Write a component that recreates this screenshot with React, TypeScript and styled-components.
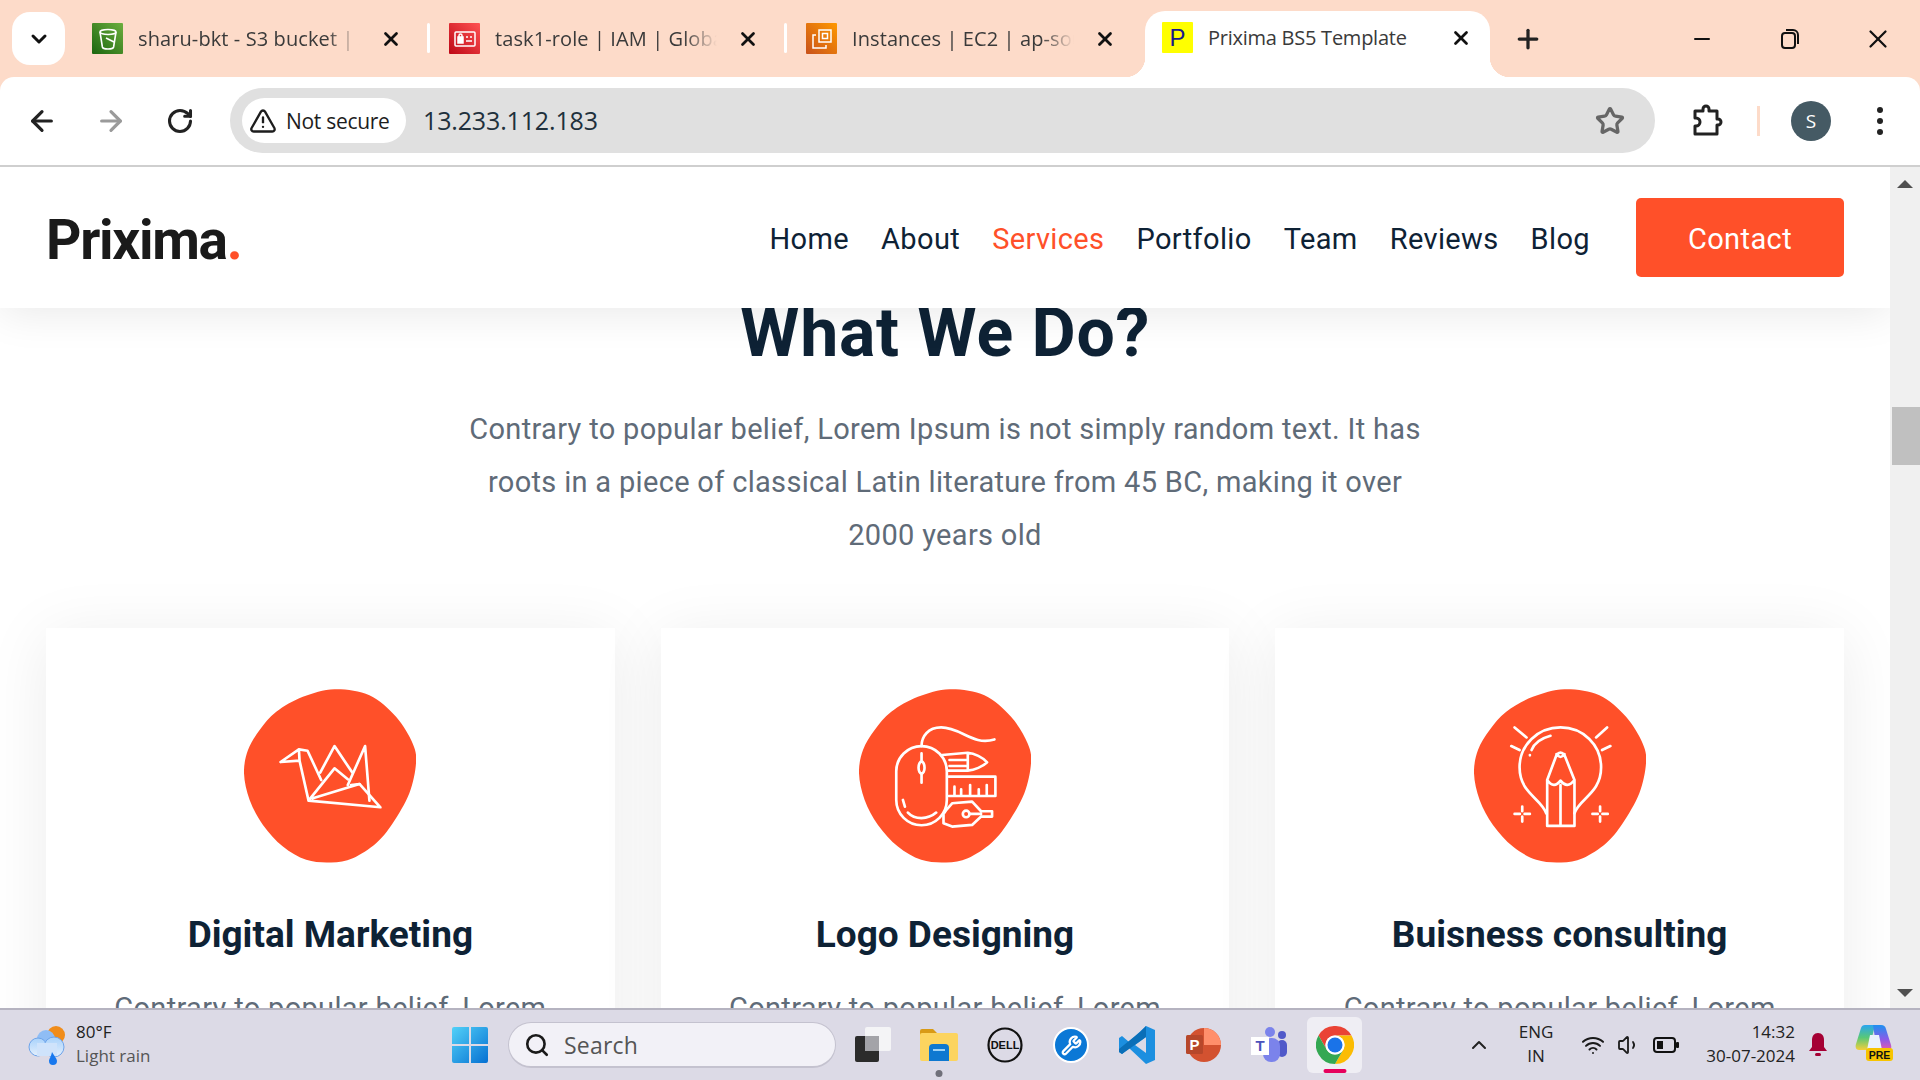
import React from 'react';
import styled, { createGlobalStyle } from 'styled-components';
import { ArrowLeft, ArrowRight, ChevronDown, ChevronUp, Minus, Plus, RotateCw, Search, Star, TriangleAlert, Volume1, Wifi, Wrench, X } from 'lucide-react';

const Global = createGlobalStyle`
  html, body { margin: 0; padding: 0; width: 1920px; height: 1080px; overflow: hidden; background: #fff; }
  * { box-sizing: border-box; }
`;

const UI_FONT = `"Open Sans", "Noto Sans", sans-serif`;
const SITE_FONT = `Roboto, "Liberation Sans", sans-serif`;
const ACCENT = '#ff5029';
const INK = '#0e2235';

const Frame = styled.div`
  width: 1920px;
  height: 1080px;
  display: flex;
  flex-direction: column;
  overflow: hidden;
  background: #fddbc9;
  font-family: ${UI_FONT};
`;

const TabStrip = styled.div`
  height: 77px;
  flex: none;
  display: flex;
  align-items: flex-start;
  background: #fddbc9;
`;

const TabListButton = styled.div`
  width: 53px;
  height: 53px;
  margin: 12px 27px 0 12px;
  border-radius: 18px;
  background: #fff;
  display: flex;
  align-items: center;
  justify-content: center;
  color: #111;
`;

const Tab = styled.div<{ $active?: boolean }>`
  position: relative;
  display: flex;
  align-items: center;
  flex: none;
  width: ${(p) => (p.$active ? '345px' : '335px')};
  height: ${(p) => (p.$active ? '66px' : '53px')};
  margin-top: ${(p) => (p.$active ? '11px' : '12px')};
  padding: ${(p) => (p.$active ? '0 0 13px 17px' : '0')};
  border-radius: ${(p) => (p.$active ? '20px 20px 0 0' : '0')};
  background: ${(p) => (p.$active ? '#fff' : 'transparent')};
  ${(p) =>
    p.$active &&
    `
    margin-left: 4px;
    &::before, &::after { content: ''; position: absolute; bottom: 0; width: 20px; height: 20px; }
    &::before { left: -20px; background: radial-gradient(circle at 0 0, transparent 20px, #fff 20.5px); }
    &::after { right: -20px; background: radial-gradient(circle at 100% 0, transparent 20px, #fff 20.5px); }
  `}
`;

const Favicon = styled.div<{ $bg: string }>`
  width: 31px;
  height: 31px;
  flex: none;
  background: ${(p) => p.$bg};
  display: flex;
  align-items: center;
  justify-content: center;
  border-radius: 1px;
`;

const YellowP = styled.span`
  font-family: "Liberation Sans", sans-serif;
  font-size: 24px;
  line-height: 1;
  color: #1a1a8c;
`;

const TabTitle = styled.div<{ $active?: boolean }>`
  width: 222px;
  margin-left: 15px;
  flex: none;
  font-size: 20px;
  line-height: 28px;
  letter-spacing: ${(p) => (p.$active ? '-0.25px' : '0.1px')};
  color: #3a3a3a;
  white-space: nowrap;
  overflow: hidden;
  ${(p) =>
    !p.$active &&
    `-webkit-mask-image: linear-gradient(to right, #000 85%, transparent 100%); mask-image: linear-gradient(to right, #000 85%, transparent 100%);`}
`;

const TabClose = styled.div`
  width: 42px;
  margin-left: 10px;
  flex: none;
  display: flex;
  justify-content: center;
  color: #111;
`;

const TabSeparator = styled.div`
  width: 3px;
  height: 30px;
  margin: 23px 19px 0 0;
  flex: none;
  background: #fff;
  border-radius: 2px;
`;

const NewTab = styled.div`
  width: 40px;
  height: 53px;
  margin: 12px 0 0 18px;
  display: flex;
  align-items: center;
  justify-content: center;
  color: #222;
`;

const WindowControls = styled.div`
  margin-left: auto;
  margin-top: 12px;
  padding-right: 12px;
  display: flex;
  gap: 28px;
`;

const WindowButton = styled.div`
  width: 60px;
  height: 53px;
  display: flex;
  align-items: center;
  justify-content: center;
  color: #111;
`;

const Toolbar = styled.div`
  height: 90px;
  flex: none;
  display: flex;
  align-items: flex-start;
  padding-top: 11px;
  background: #fff;
  border-radius: 14px 14px 0 0;
  border-bottom: 2px solid #cfcfcf;
`;

const NavButton = styled.div<{ $dim?: boolean }>`
  width: 36px;
  height: 65px;
  flex: none;
  display: flex;
  align-items: center;
  justify-content: center;
  color: ${(p) => (p.$dim ? '#9a9a9a' : '#222')};
`;

const NavButtons = styled.div`
  width: 230px;
  padding-left: 24px;
  flex: none;
  display: flex;
  gap: 33px;
`;

const AddressBar = styled.div`
  width: 1425px;
  height: 65px;
  flex: none;
  background: #e0e0e0;
  border-radius: 33px;
  display: flex;
  align-items: center;
  padding-left: 12px;
`;

const SecurityChip = styled.div`
  width: 164px;
  height: 45px;
  border-radius: 23px;
  background: #fff;
  display: flex;
  align-items: center;
  padding-left: 7px;
  gap: 9px;
  color: #1d1d1d;
  font-size: 21px;
  letter-spacing: -0.3px;
  white-space: nowrap;
`;

const Url = styled.div`
  margin: 0 0 2px 17px;
  font-size: 25px;
  color: #20303c;
  letter-spacing: -0.15px;
`;

const StarSlot = styled.div`
  margin-left: auto;
  margin-right: 30px;
  display: flex;
  color: #666;
`;

const ToolbarRight = styled.div`
  flex: 1;
  height: 65px;
  display: flex;
  align-items: center;
  padding-left: 36px;
`;

const Divider = styled.div`
  width: 3px;
  height: 30px;
  margin-left: 34px;
  background: #fddbc9;
`;

const Avatar = styled.div`
  width: 40px;
  height: 40px;
  margin-left: 31px;
  border-radius: 50%;
  background: #455a64;
  color: #fff;
  display: flex;
  align-items: center;
  justify-content: center;
  font-size: 19px;
`;

const MenuDots = styled.div`
  margin-left: 46px;
  display: flex;
  flex-direction: column;
  gap: 5px;
  & > i { display: block; width: 6px; height: 6px; border-radius: 50%; background: #222; }
`;

const Viewport = styled.div`
  height: 841px;
  flex: none;
  display: flex;
  background: #fff;
  overflow: hidden;
`;

const Page = styled.div`
  width: 1890px;
  flex: none;
  overflow: hidden;
  font-family: ${SITE_FONT};
`;

const Scrollbar = styled.div`
  width: 30px;
  flex: none;
  background: #f0f0f0;
  display: flex;
  flex-direction: column;
  align-items: center;
  padding-top: 13px;
`;

const ScrollThumb = styled.div`
  width: 28px;
  height: 58px;
  margin: 219px 0 0 2px;
  background: #c0c0c0;
`;

const ScrollArrow = styled.svg<{ $down?: boolean }>`
  width: 16px;
  height: 8px;
  flex: none;
  margin-top: ${(p) => (p.$down ? 'auto' : '0')};
  margin-bottom: ${(p) => (p.$down ? '11px' : '0')};
`;

const SiteHeader = styled.header`
  position: relative;
  z-index: 2;
  height: 141px;
  padding: 0 46px;
  display: flex;
  align-items: center;
  background: #fff;
  box-shadow: 0 5px 40px rgba(0, 0, 0, 0.09);
`;

const Logo = styled.div`
  font-size: 55px;
  font-weight: 700;
  letter-spacing: -1.3px;
  color: #1a1a1a;
  margin-top: 5px;
`;

const LogoDot = styled.span`
  color: ${ACCENT};
`;

const SiteNav = styled.nav`
  margin-left: auto;
  display: flex;
  align-items: center;
  gap: 32px;
`;

const SiteLink = styled.a<{ $active?: boolean }>`
  padding-top: 2px;
  font-size: 29px;
  font-weight: 400;
  letter-spacing: 0.37px;
  color: ${(p) => (p.$active ? ACCENT : INK)};
`;

const ContactButton = styled.a`
  width: 208px;
  height: 79px;
  margin-left: 14px;
  padding-top: 2px;
  border-radius: 5px;
  background: ${ACCENT};
  color: #fff;
  font-size: 29px;
  letter-spacing: 0.4px;
  display: flex;
  align-items: center;
  justify-content: center;
`;

const Services = styled.section`
  margin-top: -14px;
  padding: 0 46px;
  display: flex;
  flex-direction: column;
  align-items: center;
`;

const Heading = styled.h2`
  margin: 0;
  font-size: 68px;
  line-height: 78px;
  font-weight: 700;
  color: ${INK};
  letter-spacing: 0.7px;
`;

const Lead = styled.p`
  width: 990px;
  margin: 31px 0 0;
  font-size: 29px;
  line-height: 53px;
  font-weight: 400;
  letter-spacing: 0.32px;
  color: #5f6b78;
  text-align: center;
`;

const CardRow = styled.div`
  width: 100%;
  margin-top: 66px;
  display: grid;
  grid-template-columns: repeat(3, 1fr);
  gap: 46px;
`;

const Card = styled.article`
  padding: 61px 40px 40px;
  background: #fff;
  box-shadow: 0 8px 60px rgba(0, 0, 0, 0.08);
  display: flex;
  flex-direction: column;
  align-items: center;
`;

const BlobIcon = styled.svg`
  width: 172px;
  height: 174px;
  flex: none;
`;

const CardTitle = styled.h3`
  margin: 50px 0 0;
  font-size: 37px;
  line-height: 44px;
  font-weight: 700;
  color: ${INK};
  white-space: nowrap;
`;

const CardText = styled.p`
  margin: 25px 0 0;
  font-size: 29px;
  line-height: 53px;
  letter-spacing: 0.32px;
  color: #5f6b78;
  text-align: center;
  white-space: nowrap;
`;

const Taskbar = styled.div`
  height: 72px;
  flex: none;
  display: flex;
  align-items: center;
  padding-left: 28px;
  background: #dcdae6;
  border-top: 2px solid #b5b3c0;
`;

const Weather = styled.div`
  width: 424px;
  flex: none;
  display: flex;
  align-items: center;
  gap: 10px;
`;

const WeatherText = styled.div`
  margin-bottom: 2px;
  font-size: 17px;
  line-height: 24px;
  color: #222;
  & > div + div { color: #555; }
`;

const StartIcon = styled.svg`
  width: 36px;
  height: 36px;
  flex: none;
  margin-right: 20px;
`;

const SearchBox = styled.div`
  width: 328px;
  height: 46px;
  flex: none;
  border-radius: 23px;
  background: #f2f1f7;
  border: 1px solid #c4c2cf;
  border-bottom-width: 2px;
  margin-right: 4px;
  display: flex;
  align-items: center;
  gap: 14px;
  padding-left: 15px;
  font-size: 23px;
  color: #555;
  letter-spacing: 0.2px;
`;

const AppSlot = styled.div<{ $active?: boolean }>`
  position: relative;
  width: ${(p) => (p.$active ? '55px' : '66px')};
  height: 56px;
  margin-left: ${(p) => (p.$active ? '5px' : '0')};
  flex: none;
  display: flex;
  align-items: center;
  justify-content: center;
  border-radius: 6px;
  background: ${(p) => (p.$active ? '#efeef4' : 'transparent')};
`;

const RunningDot = styled.span<{ $pink?: boolean }>`
  position: absolute;
  left: 50%;
  bottom: ${(p) => (p.$pink ? '0' : '-4px')};
  transform: translateX(-50%);
  width: ${(p) => (p.$pink ? '23px' : '7px')};
  height: ${(p) => (p.$pink ? '4px' : '7px')};
  border-radius: 4px;
  background: ${(p) => (p.$pink ? '#e6005c' : '#70707a')};
`;

const TrayCaret = styled.div`
  width: 24px;
  margin-left: 105px;
  display: flex;
  justify-content: center;
  color: #222;
`;

const Lang = styled.div`
  width: 50px;
  margin: 0 0 2px 20px;
  text-align: center;
  font-size: 17px;
  line-height: 24px;
  color: #222;
`;

const TraySystem = styled.div`
  margin-left: 20px;
  display: flex;
  align-items: center;
  gap: 12px;
  color: #1a1a1a;
`;

const Clock = styled.div`
  width: 100px;
  margin: 0 0 2px 16px;
  text-align: right;
  font-size: 17px;
  line-height: 24px;
  color: #222;
`;

const TrayIcon = styled.svg<{ $gap: number }>`
  flex: none;
  margin-left: ${(p) => p.$gap}px;
`;

function S3Glyph() {
  return (
    <svg width="24" height="24" viewBox="0 0 24 24" fill="none" stroke="#fff" strokeWidth="1.6">
      <ellipse cx="12" cy="5" rx="8" ry="2.5" />
      <path d="M4 5l2.4 15c.2 1 2.6 2 5.6 2s5.400-1 5.600-2L20 5M10 11l8 4" />
    </svg>
  );
}

function IamGlyph() {
  return (
    <svg width="24" height="24" viewBox="0 0 24 24" fill="none" stroke="#fff" strokeWidth="1.5">
      <rect x="2" y="5" width="20" height="14" rx="1" />
      <rect x="5" y="10" width="5" height="6" fill="#fff" />
      <path d="M6 10V8.500a1.500 1.500 0 013 0V10M13 10h2M17 10h2M13 14h6" />
    </svg>
  );
}

function Ec2Glyph() {
  return (
    <svg width="24" height="24" viewBox="0 0 24 24" fill="none" stroke="#fff" strokeWidth="1.500">
      <rect x="9" y="3" width="12" height="12" />
      <rect x="12.500" y="6.500" width="5" height="5" />
      <path d="M6 8H3v13h13v-3" />
    </svg>
  );
}

function RestoreGlyph() {
  return (
    <svg width="20" height="22" viewBox="0 0 20 22" fill="none" stroke="#111" strokeWidth="2">
      <rect x="2" y="5" width="13" height="15" rx="3" />
      <path d="M6 2h7a5 5 0 015 5v9" />
    </svg>
  );
}

function ExtensionGlyph() {
  return (
    <svg width="32" height="34" viewBox="0 0 32 34" fill="none" stroke="#222" strokeWidth="3" strokeLinejoin="round">
      <path d="M4 7h8V5a3 3 0 016 0v2h8v8h1a3 3 0 010 6h-1v9H4v-8h1a4 4 0 000-8H4z" />
    </svg>
  );
}

const OUTLINE: [number, number][] = [
  [345, 57], [450, 75], [530, 140], [580, 220], [590, 280], [570, 370], [520, 460], [470, 520], [400, 565], [335, 578],
  [260, 570], [190, 530], [130, 465], [90, 390], [73, 310], [85, 240], [120, 180], [170, 125], [250, 80],
];

function smoothClosedPath(points: [number, number][]) {
  const n = points.length;
  let d = `M${points[0][0]} ${points[0][1]}`;
  for (let i = 0; i < n; i++) {
    const p0 = points[(i - 1 + n) % n];
    const p1 = points[i];
    const p2 = points[(i + 1) % n];
    const p3 = points[(i + 2) % n];
    const c1x = p1[0] + (p2[0] - p0[0]) / 6;
    const c1y = p1[1] + (p2[1] - p0[1]) / 6;
    const c2x = p2[0] - (p3[0] - p1[0]) / 6;
    const c2y = p2[1] - (p3[1] - p1[1]) / 6;
    d += `C${c1x.toFixed(1)} ${c1y.toFixed(1)} ${c2x.toFixed(1)} ${c2y.toFixed(1)} ${p2[0]} ${p2[1]}`;
  }
  return `${d}Z`;
}

const BLOB = smoothClosedPath(OUTLINE);

function CraneIcon() {
  return (
    <BlobIcon viewBox="73 57 517 522">
      <path d={BLOB} fill={ACCENT} />
      <g fill="none" stroke="#fff" strokeWidth="8" strokeLinejoin="round" strokeLinecap="round">
        <path d="M183 276L238 238L264 242L305 330M183 276L240 272L238 238M240 272L267 392L483 412L420 342L280 385M267 392L345 295L385 328" />
        <path d="M302 308L345 228L400 310M385 345L437 228L450 392M420 342L395 345" />
      </g>
    </BlobIcon>
  );
}

function MouseToolsIcon() {
  return (
    <BlobIcon viewBox="58 57 517 522">
      <path d={BLOB} fill={ACCENT} transform="translate(-15 0)" />
      <g fill="none" stroke="#fff" strokeWidth="8" strokeLinejoin="round" strokeLinecap="round">
        <rect x="170" y="228" width="152" height="238" rx="76" />
        <ellipse cx="246" cy="293" rx="9" ry="18" />
        <path d="M246 228C246 200 265 172 305 172C365 172 400 228 465 208M246 250V275M246 311V338M190 390L196 410M205 428C225 450 265 450 290 428" />
        <path d="M308 255L385 248C405 250 430 262 443 277C430 290 405 300 385 302L326 302M330 270H382M330 288H382M385 250V300" />
        <path d="M328 320H468V378H328M345 378V350M365 378V358M392 378V345M418 378V358M442 378V345" />
        <path d="M322 418L338 400L398 395L425 424H458V440H425L398 465L338 470L312 460V432L322 418M390 432H425" />
        <circle cx="380" cy="432" r="10" />
      </g>
    </BlobIcon>
  );
}

function BulbIcon() {
  return (
    <BlobIcon viewBox="70 57 517 522">
      <path d={BLOB} fill={ACCENT} transform="translate(-3 0)" />
      <g fill="none" stroke="#fff" strokeWidth="8" strokeLinejoin="round" strokeLinecap="round">
        <path d="M287 430C272 385 207 370 207 292C207 225 262 172 330 172C398 172 452 225 452 292C452 370 387 385 372 430" />
        <path d="M243 240C250 222 270 205 300 197M238 255V256" />
        <path d="M290 330L318 255Q330 240 342 255L372 330V468H290ZM290 330Q310 358 330 332Q350 358 372 330M330 345V468M318 252Q330 270 342 252" />
        <path d="M192 172L228 202M182 228L207 240M470 172L437 202M480 228L455 240" />
        <path d="M192 432H208M222 432H238M215 410V424M215 440V455M426 432H442M456 432H472M449 410V424M449 440V455" />
      </g>
    </BlobIcon>
  );
}

function WeatherIcon() {
  return (
    <svg width="38" height="40" viewBox="0 0 38 40">
      <defs>
        <linearGradient id="cl" x1="0" y1="0" x2="0" y2="1"><stop offset="0" stopColor="#a9d2fb" /><stop offset="1" stopColor="#e3effc" /></linearGradient>
      </defs>
      <circle cx="28" cy="10" r="9" fill="#f08c1a" />
      <circle cx="18" cy="14" r="9" fill="#8fbdf5" />
      <circle cx="10" cy="22" r="9" fill="url(#cl)" stroke="#6ea4ea" strokeWidth="1" />
      <circle cx="26" cy="22" r="10" fill="url(#cl)" stroke="#6ea4ea" strokeWidth="1" />
      <rect x="9" y="18" width="20" height="13" fill="#cfe3fb" />
      <path d="M24 27c3 5 5 7 5 9a4 4 0 01-8 0c0-2 2-4 3-9z" fill="#1878ee" />
    </svg>
  );
}

function TaskViewIcon() {
  return (
    <svg width="36" height="36" viewBox="0 0 36 36">
      <rect x="10" y="0" width="26" height="24" rx="2" fill="#f4f4f6" />
      <rect x="0" y="9" width="24" height="26" rx="2" fill="#2b2b2b" />
      <rect x="10" y="9" width="14" height="15" fill="#a3a3a8" />
    </svg>
  );
}

function FolderIcon() {
  return (
    <svg width="38" height="34" viewBox="0 0 38 34">
      <path d="M0 3a2 2 0 012-2h11l4 4h19v5H0z" fill="#d89a16" />
      <rect x="0" y="5" width="38" height="28" rx="2" fill="#fcd45f" />
      <path d="M9 20a4 4 0 014-4h12a4 4 0 014 4v13H9z" fill="#0e78d0" />
      <rect x="13" y="21" width="12" height="2" fill="#9cd2f7" />
    </svg>
  );
}

function DellIcon() {
  return (
    <svg width="36" height="36" viewBox="0 0 36 36">
      <circle cx="18" cy="18" r="16.500" fill="none" stroke="#111" strokeWidth="2.200" />
      <text x="18" y="22" textAnchor="middle" fontFamily="'Liberation Sans', sans-serif" fontWeight="700" fontSize="11" fill="#111">DELL</text>
    </svg>
  );
}

const WrenchBadge = styled.div`
  width: 36px;
  height: 36px;
  border-radius: 50%;
  background: #0b78d6;
  border: 2px solid #fff;
  display: flex;
  align-items: center;
  justify-content: center;
  color: #fff;
`;

function VsCodeIcon() {
  return (
    <svg width="36" height="38" viewBox="0 0 36 38">
      <path d="M27 0L36 4V34L27 38L10 22L3 28L0 26V12L3 10L10 16ZM27 11L16 19L27 27Z" fill="#1c8fe0" />
      <path d="M27 0V11L3 28L0 26V23L21 6Z" fill="#0a6fb8" />
    </svg>
  );
}

function PowerPointIcon() {
  return (
    <svg width="36" height="38" viewBox="0 0 36 38">
      <circle cx="19" cy="19" r="17" fill="#d35230" />
      <path d="M19 2a17 17 0 0117 17H19z" fill="#ff8f6b" />
      <rect x="1" y="9" width="17" height="19" rx="1.500" fill="#b7472a" />
      <text x="9.500" y="24" textAnchor="middle" fontFamily="'Liberation Sans', sans-serif" fontWeight="700" fontSize="15" fill="#fff">P</text>
    </svg>
  );
}

function TeamsIcon() {
  return (
    <svg width="36" height="38" viewBox="0 0 36 38">
      <circle cx="19" cy="6" r="5" fill="#7b83eb" />
      <circle cx="31" cy="9" r="4" fill="#5059c9" />
      <rect x="26" y="14" width="10" height="17" rx="5" fill="#5059c9" />
      <rect x="12" y="12" width="17" height="24" rx="8" fill="#7b83eb" />
      <rect x="0" y="11" width="18" height="18" fill="#fff" />
      <text x="9" y="25" textAnchor="middle" fontFamily="'Liberation Sans', sans-serif" fontWeight="700" fontSize="15" fill="#4b53bc">T</text>
    </svg>
  );
}

function ChromeIcon() {
  return (
    <svg width="38" height="38" viewBox="0 0 48 48">
      <path d="M3.200 12A24 24 0 0144.800 12H24A12 12 0 0013.600 30Z" fill="#ea4335" />
      <path d="M44.800 12A24 24 0 0124 48L34.400 30A12 12 0 0024 12Z" fill="#fbbc04" />
      <path d="M24 48A24 24 0 013.200 12L13.600 30A12 12 0 0034.400 30Z" fill="#34a853" />
      <circle cx="24" cy="24" r="12" fill="#fff" />
      <circle cx="24" cy="24" r="9.500" fill="#1a73e8" />
    </svg>
  );
}

function CopilotIcon() {
  return (
    <svg width="38" height="38" viewBox="0 0 38 38">
      <defs>
        <linearGradient id="cpl" x1="0" y1="0" x2="0" y2="1">
          <stop offset="0" stopColor="#2aa5f0" /><stop offset="0.5" stopColor="#58c878" /><stop offset="1" stopColor="#f5cf3a" />
        </linearGradient>
        <linearGradient id="cpr" x1="0" y1="0" x2="0" y2="1">
          <stop offset="0" stopColor="#1e90f0" /><stop offset="0.55" stopColor="#8a5be8" /><stop offset="1" stopColor="#ec5aa8" />
        </linearGradient>
      </defs>
      <path d="M10 1h10L14 26H4C1 26 0 23 1 20L6 4c.6-2 2-3 4-3z" fill="url(#cpl)" />
      <path d="M18 1h8c3 0 4 1 5 4l5 16c1 4-1 6-4 6H22z" fill="url(#cpr)" />
      <path d="M15 11h9l3 15H12z" fill="#eaf2fc" />
      <rect x="11" y="24" width="27" height="13" rx="3" fill="#f7c400" />
      <text x="24.500" y="34.500" textAnchor="middle" fontFamily="'Liberation Sans', sans-serif" fontWeight="700" fontSize="10.500" fill="#111">PRE</text>
    </svg>
  );
}

const cards = [
  { title: 'Digital Marketing', Icon: CraneIcon },
  { title: 'Logo Designing', Icon: MouseToolsIcon },
  { title: 'Buisness consulting', Icon: BulbIcon },
];

const links = ['Home', 'About', 'Services', 'Portfolio', 'Team', 'Reviews', 'Blog'];

const tabs = [
  { title: 'sharu-bkt - S3 bucket | S3', bg: 'linear-gradient(45deg,#1b660f,#6cae3e)', glyph: <S3Glyph /> },
  { title: 'task1-role | IAM | Global', bg: 'linear-gradient(45deg,#bd0816,#ff5252)', glyph: <IamGlyph /> },
  { title: 'Instances | EC2 | ap-south-1', bg: 'linear-gradient(45deg,#c8511b,#ff9900)', glyph: <Ec2Glyph /> },
];

export default function App() {
  return (
    <Frame>
      <Global />
      <TabStrip>
        <TabListButton><ChevronDown size={24} strokeWidth={3} /></TabListButton>
        {tabs.map((t, i) => (
          <React.Fragment key={t.title}>
            <Tab>
              <Favicon $bg={t.bg}>{t.glyph}</Favicon>
              <TabTitle>{t.title}</TabTitle>
              <TabClose><X size={22} strokeWidth={3} /></TabClose>
            </Tab>
            {i < 2 && <TabSeparator />}
          </React.Fragment>
        ))}
        <Tab $active>
          <Favicon $bg="#ffff00"><YellowP>P</YellowP></Favicon>
          <TabTitle $active>Prixima BS5 Template</TabTitle>
          <TabClose><X size={22} strokeWidth={3} /></TabClose>
        </Tab>
        <NewTab><Plus size={30} strokeWidth={2.6} /></NewTab>
        <WindowControls>
          <WindowButton><Minus size={24} strokeWidth={2} /></WindowButton>
          <WindowButton><RestoreGlyph /></WindowButton>
          <WindowButton><X size={30} strokeWidth={1.8} /></WindowButton>
        </WindowControls>
      </TabStrip>

      <Toolbar>
        <NavButtons>
          <NavButton><ArrowLeft size={32} strokeWidth={2.4} /></NavButton>
          <NavButton $dim><ArrowRight size={32} strokeWidth={2.4} /></NavButton>
          <NavButton><RotateCw size={28} strokeWidth={2.6} /></NavButton>
        </NavButtons>
        <AddressBar>
          <SecurityChip><TriangleAlert size={28} strokeWidth={2} />Not secure</SecurityChip>
          <Url>13.233.112.183</Url>
          <StarSlot><Star size={30} strokeWidth={2.6} /></StarSlot>
        </AddressBar>
        <ToolbarRight>
          <ExtensionGlyph />
          <Divider />
          <Avatar>S</Avatar>
          <MenuDots><i /><i /><i /></MenuDots>
        </ToolbarRight>
      </Toolbar>

      <Viewport>
        <Page>
          <SiteHeader>
            <Logo>Prixima<LogoDot>.</LogoDot></Logo>
            <SiteNav>
              {links.map((l) => (
                <SiteLink key={l} $active={l === 'Services'}>{l}</SiteLink>
              ))}
              <ContactButton>Contact</ContactButton>
            </SiteNav>
          </SiteHeader>
          <Services>
            <Heading>What We Do?</Heading>
            <Lead>
              Contrary to popular belief, Lorem Ipsum is not simply random text. It has<br />
              roots in a piece of classical Latin literature from 45 BC, making it over<br />
              2000 years old
            </Lead>
            <CardRow>
              {cards.map(({ title, Icon }) => (
                <Card key={title}>
                  <Icon />
                  <CardTitle>{title}</CardTitle>
                  <CardText>Contrary to popular belief, Lorem</CardText>
                </Card>
              ))}
            </CardRow>
          </Services>
        </Page>
        <Scrollbar>
          <ScrollArrow viewBox="0 0 16 8"><path d="M8 0L16 8H0Z" fill="#505050" /></ScrollArrow>
          <ScrollThumb />
          <ScrollArrow $down viewBox="0 0 16 8"><path d="M8 8L16 0H0Z" fill="#505050" /></ScrollArrow>
        </Scrollbar>
      </Viewport>

      <Taskbar>
        <Weather>
          <WeatherIcon />
          <WeatherText><div>80°F</div><div>Light rain</div></WeatherText>
        </Weather>
        <StartIcon viewBox="0 0 36 36">
          <defs>
            <linearGradient id="wn" x1="0" y1="0" x2="1" y2="1"><stop offset="0" stopColor="#52d1f8" /><stop offset="1" stopColor="#0670d2" /></linearGradient>
          </defs>
          <path d="M0 2a2 2 0 012-2h15v17H0zM19 0h15a2 2 0 012 2v15H19zM0 19h17v17H2a2 2 0 01-2-2zM19 19h17v15a2 2 0 01-2 2H19z" fill="url(#wn)" />
        </StartIcon>
        <SearchBox><Search size={26} strokeWidth={2.4} color="#1a1a1a" />Search</SearchBox>
        <AppSlot><TaskViewIcon /></AppSlot>
        <AppSlot><FolderIcon /><RunningDot /></AppSlot>
        <AppSlot><DellIcon /></AppSlot>
        <AppSlot><WrenchBadge><Wrench size={21} strokeWidth={2.6} /></WrenchBadge></AppSlot>
        <AppSlot><VsCodeIcon /></AppSlot>
        <AppSlot><PowerPointIcon /></AppSlot>
        <AppSlot><TeamsIcon /></AppSlot>
        <AppSlot $active><ChromeIcon /><RunningDot $pink /></AppSlot>
        <TrayCaret><ChevronUp size={26} strokeWidth={2} /></TrayCaret>
        <Lang><div>ENG</div><div>IN</div></Lang>
        <TraySystem>
          <Wifi size={24} strokeWidth={2} />
          <Volume1 size={24} strokeWidth={1.8} />
          <svg width="26" height="16" viewBox="0 0 26 16" fill="none">
            <rect x="1" y="1" width="21" height="14" rx="3" stroke="#111" strokeWidth="2" />
            <rect x="4" y="4" width="6" height="8" fill="#111" />
            <rect x="23" y="5" width="3" height="6" rx="1" fill="#111" />
          </svg>
        </TraySystem>
        <Clock><div>14:32</div><div>30-07-2024</div></Clock>
        <TrayIcon $gap={12} width="22" height="26" viewBox="0 0 22 26">
          <path d="M11 1c4 0 6 3 6 7v7l3 4H2l3-4V8c0-4 2-7 6-7z" fill="#a50034" />
          <rect x="8" y="21" width="6" height="3" rx="1.500" fill="#a50034" />
        </TrayIcon>
        <TrayIcon as="span" $gap={26}><CopilotIcon /></TrayIcon>
      </Taskbar>
    </Frame>
  );
}
